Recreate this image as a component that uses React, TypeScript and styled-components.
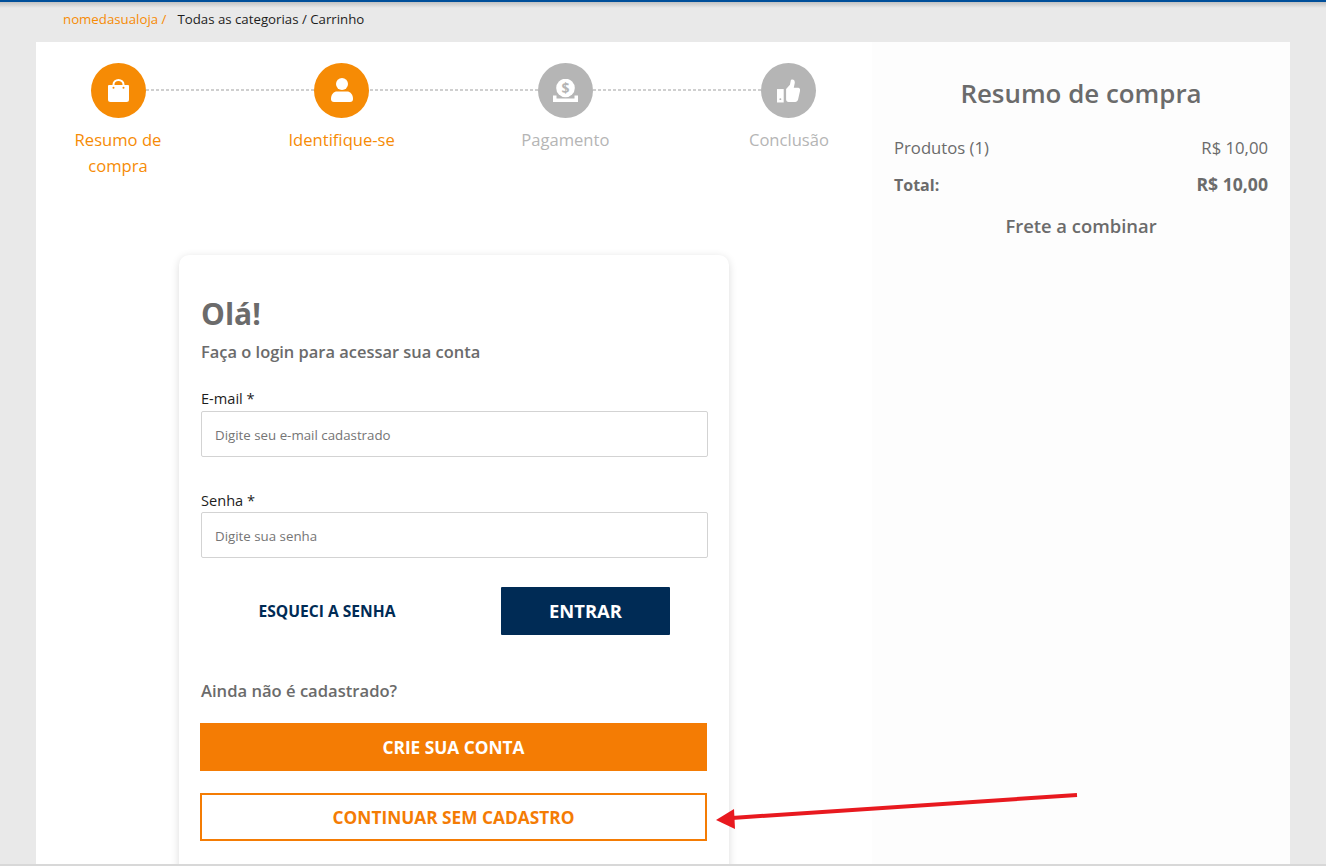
import styled, { createGlobalStyle } from "styled-components";

const GlobalStyle = createGlobalStyle`
  * { box-sizing: border-box; }
  html, body {
    margin: 0;
    height: 100%;
    overflow: hidden;
    background: #e9e9e9;
    font-family: "Open Sans", "Liberation Sans", sans-serif;
  }
`;

const Page = styled.div`
  position: relative;
  height: 866px;
  overflow: hidden;
  border-top: 2px solid #004f9a;
  border-bottom: 2px solid #d8d8d8;
`;

const TopShadow = styled.div`
  position: absolute;
  top: 0;
  left: 0;
  right: 0;
  height: 6px;
  background: linear-gradient(#c2c2c2, #e9e9e9);
`;

const Breadcrumb = styled.nav`
  height: 40px;
  padding: 8px 0 0 63px;
  display: flex;
  gap: 11px;
  font-size: 13.25px;
  line-height: 18px;
`;

const Crumb = styled.span<{ $accent?: boolean }>`
  color: ${(p) => (p.$accent ? "#f68b05" : "#1d1d1d")};
`;

const Container = styled.main`
  width: 1254px;
  margin-left: 36px;
  display: flex;
  align-items: stretch;
  height: 830px;
`;

const Checkout = styled.section`
  width: 836px;
  background: #fff;
  padding: 21px 28px 0 27px;
`;

const Stepper = styled.ol`
  list-style: none;
  display: flex;
  justify-content: space-between;
  margin: 0;
  padding: 0;
`;

const Step = styled.li<{ $line?: boolean }>`
  position: relative;
  width: 110px;
  display: flex;
  flex-direction: column;
  align-items: center;

  ${(p) =>
    p.$line &&
    `&::after {
      content: "";
      position: absolute;
      top: 26px;
      left: 83px;
      width: 168px;
      height: 2px;
      background: repeating-linear-gradient(90deg, #cfcfcf 0 3px, transparent 3px 5px);
    }`}
`;

const Circle = styled.div<{ $active?: boolean }>`
  width: 55px;
  height: 55px;
  border-radius: 50%;
  display: flex;
  align-items: center;
  justify-content: center;
  background: ${(p) => (p.$active ? "#f68b05" : "#b5b5b5")};
`;

const StepLabel = styled.span<{ $active?: boolean }>`
  margin-top: 9px;
  font-size: 16.6px;
  line-height: 26px;
  text-align: center;
  color: ${(p) => (p.$active ? "#f68b05" : "#b5b5b5")};
`;

const Card = styled.div`
  width: 550px;
  margin: 76px 0 0 116px;
  padding: 22px 21px 0 22px;
  height: 640px;
  background: #fff;
  border-radius: 10px;
  box-shadow: 0 2px 9px rgba(0, 0, 0, 0.14);
`;

const Hello = styled.h1`
  margin: 16px 0 0;
  font-size: 30px;
  line-height: 42px;
  font-weight: 700;
  color: #6b6b6b;
`;

const Sub = styled.p`
  margin: 6px 0 0;
  font-size: 16.45px;
  line-height: 22px;
  font-weight: 600;
  color: #6b6b6b;
`;

const Field = styled.label<{ $gap: number }>`
  display: block;
  margin-top: ${(p) => p.$gap}px;
  font-size: 14.6px;
  line-height: 20px;
  color: #1d1d1d;
`;

const Input = styled.input<{ $top: number }>`
  display: block;
  width: 507px;
  height: 46px;
  margin-top: ${(p) => p.$top}px;
  padding: 1px 13px 0;
  border: 1px solid #d3d3d3;
  border-radius: 2px;
  background: #fff;
  font: 400 13.3px "Open Sans", sans-serif;
  outline: none;

  &::placeholder {
    color: #757575;
    opacity: 1;
  }
`;

const Actions = styled.div`
  margin-top: 29px;
  display: flex;
  align-items: center;
`;

const LinkButton = styled.button`
  width: 252px;
  padding: 0;
  border: none;
  background: none;
  font: 700 15.6px "Open Sans", sans-serif;
  color: #002b55;
`;

const EnterButton = styled.button`
  width: 169px;
  height: 48px;
  margin-left: 48px;
  padding: 0 0 2px;
  border: none;
  border-radius: 1px;
  background: #002b55;
  color: #fff;
  font: 700 18.4px "Open Sans", sans-serif;
`;

const Prompt = styled.p`
  margin: 45px 0 0;
  font-size: 16.6px;
  line-height: 22px;
  font-weight: 600;
  color: #6b6b6b;
`;

const WideButton = styled.button<{ $outline?: boolean }>`
  display: block;
  width: 507px;
  height: 48px;
  margin: ${(p) => (p.$outline ? "22px" : "21px")} 0 0 -1px;
  border: 2px solid #f47c04;
  background: ${(p) => (p.$outline ? "#fff" : "#f47c04")};
  color: ${(p) => (p.$outline ? "#f47c04" : "#fff")};
  font: 700 17.3px "Open Sans", sans-serif;
`;

const Summary = styled.aside`
  width: 418px;
  background: #fdfdfd;
  padding: 33px 22px 0;
  color: #6b6b6b;
`;

const SummaryTitle = styled.h2`
  margin: 0;
  text-align: center;
  font-size: 25.9px;
  line-height: 36px;
  font-weight: 600;
`;

const SummaryRow = styled.div<{ $bold?: boolean; $gap: number }>`
  display: flex;
  justify-content: space-between;
  align-items: baseline;
  margin-top: ${(p) => p.$gap}px;
  font-size: ${(p) => (p.$bold ? 16 : 16.7)}px;
  line-height: 22px;
  font-weight: ${(p) => (p.$bold ? 700 : 400)};
`;

const TotalAmount = styled.span`
  font-size: 17.6px;
`;

const Shipping = styled.p`
  margin: 18px 0 0;
  text-align: center;
  font-size: 18.4px;
  line-height: 24px;
  font-weight: 600;
`;

const Arrow = styled.svg`
  position: absolute;
  left: 700px;
  top: 778px;
`;

const BagIcon = () => (
  <svg width="21" height="23" viewBox="0 0 21 23" fill="none">
    <path d="M5.500 8V5.500a5 4.500 0 0 1 10 0V8" stroke="#fff" strokeWidth="2" />
    <path
      d="M1 6h19a1 1 0 0 1 1 1v13.500a2.500 2.500 0 0 1-2.500 2.500h-16A2.500 2.500 0 0 1 0 20.500V7a1 1 0 0 1 1-1z"
      fill="#fff"
    />
    <circle cx="5.500" cy="8.700" r="1" fill="#f68b05" />
    <circle cx="15.500" cy="8.700" r="1" fill="#f68b05" />
  </svg>
);

const UserIcon = () => (
  <svg width="22" height="25" viewBox="0 0 22 25" fill="#fff">
    <circle cx="11" cy="6" r="6" />
    <path d="M0 21c0-5 3-7.500 6-7.500h10c3 0 6 2.500 6 7.500 0 2-1 3-3 3H3c-2 0-3-1-3-3z" />
  </svg>
);

const PayIcon = () => (
  <svg width="25" height="23" viewBox="0 0 25 23">
    <circle cx="12.500" cy="9" r="9.300" fill="#fff" />
    <text
      x="12.500"
      y="14"
      textAnchor="middle"
      fontFamily="Open Sans, sans-serif"
      fontWeight="700"
      fontSize="14"
      fill="#b5b5b5"
    >
      $
    </text>
    <path d="M0 16.500h3.500v3h18v-3H25V23H0z" fill="#fff" />
  </svg>
);

const ThumbIcon = () => (
  <svg width="23" height="25" viewBox="0 0 24 25" fill="#fff">
    <path d="M0 11h7v14H0z" />
    <path d="M9.500 11l4-4.500 1-5c2.500-1.500 4.500.5 4 3.500l-1 4.500h4c2.500 0 3 2 2.500 3.500l-2 9c-.5 1.500-1.500 2.500-3 2.500h-7c-1.500 0-2.500-1-2.500-2.500z" />
    <circle cx="3.500" cy="21.500" r="1" fill="#b5b5b5" />
  </svg>
);

const steps = [
  { label: "Resumo de compra", active: true, icon: <BagIcon /> },
  { label: "Identifique-se", active: true, icon: <UserIcon /> },
  { label: "Pagamento", active: false, icon: <PayIcon /> },
  { label: "Conclusão", active: false, icon: <ThumbIcon /> },
];

export default function App() {
  return (
    <Page>
      <GlobalStyle />
      <TopShadow />
      <Breadcrumb>
        <Crumb $accent>nomedasualoja /</Crumb>
        <Crumb>Todas as categorias / Carrinho</Crumb>
      </Breadcrumb>
      <Container>
        <Checkout>
          <Stepper>
            {steps.map((step, i) => (
              <Step key={step.label} $line={i < steps.length - 1}>
                <Circle $active={step.active}>{step.icon}</Circle>
                <StepLabel $active={step.active}>{step.label}</StepLabel>
              </Step>
            ))}
          </Stepper>
          <Card>
            <Hello>Olá!</Hello>
            <Sub>Faça o login para acessar sua conta</Sub>
            <Field $gap={25}>
              E-mail *
              <Input $top={3} placeholder="Digite seu e-mail cadastrado" />
            </Field>
            <Field $gap={33}>
              Senha *
              <Input $top={2} placeholder="Digite sua senha" />
            </Field>
            <Actions>
              <LinkButton>ESQUECI A SENHA</LinkButton>
              <EnterButton>ENTRAR</EnterButton>
            </Actions>
            <Prompt>Ainda não é cadastrado?</Prompt>
            <WideButton>CRIE SUA CONTA</WideButton>
            <WideButton $outline>CONTINUAR SEM CADASTRO</WideButton>
          </Card>
        </Checkout>
        <Summary>
          <SummaryTitle>Resumo de compra</SummaryTitle>
          <SummaryRow $gap={26}>
            <span>Produtos (1)</span>
            <span>R$ 10,00</span>
          </SummaryRow>
          <SummaryRow $gap={14} $bold>
            <span>Total:</span>
            <TotalAmount>R$ 10,00</TotalAmount>
          </SummaryRow>
          <Shipping>Frete a combinar</Shipping>
        </Summary>
      </Container>
      <Arrow width="400" height="60" viewBox="0 0 400 60">
        <path d="M377 15L32 38" stroke="#e8191f" strokeWidth="4" />
        <path d="M16 40l18-11 1 20z" fill="#e8191f" />
      </Arrow>
    </Page>
  );
}
